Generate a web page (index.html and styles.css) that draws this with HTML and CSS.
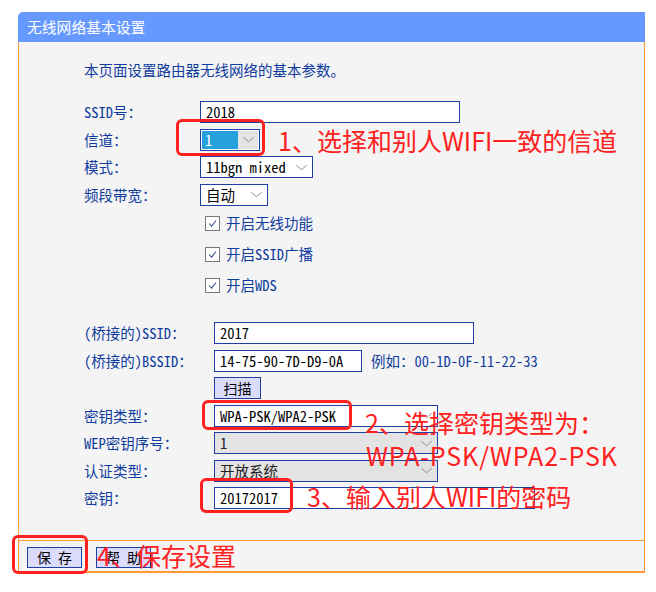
FILE: index.html
```html
<!DOCTYPE html>
<html lang="zh-CN">
<head>
  <meta charset="UTF-8"/>
  <title>无线网络基本设置</title>
  <link rel="stylesheet" href="styles.css">
</head>
<body>

  <div class="panel">
    <div class="panel-title">无线网络基本设置</div>

    <div class="panel-body">
      <p class="intro">本页面设置路由器无线网络的基本参数。</p>

      <!-- Basic settings -->
      <div class="form form-a">
        <label>SSID号：</label>
        <div class="field w-260">2018</div>

        <label>信道：</label>
        <div class="select w-60">
          <span class="picked">1</span>
          <span class="arrow gray"><svg viewBox="0 0 14 8"><path d="M1 1.5 L7 6.5 L13 1.5"/></svg></span>
        </div>

        <label>模式：</label>
        <div class="select w-113">
          <span class="val">11bgn mixed</span>
          <span class="arrow"><svg viewBox="0 0 14 8"><path d="M1 1.5 L7 6.5 L13 1.5"/></svg></span>
        </div>

        <label>频段带宽：</label>
        <div class="select w-68">
          <span class="val">自动</span>
          <span class="arrow"><svg viewBox="0 0 14 8"><path d="M1 1.5 L7 6.5 L13 1.5"/></svg></span>
        </div>
      </div>

      <!-- Switches -->
      <div class="checks">
        <div class="check"><span class="box"><svg viewBox="0 0 15 15"><path d="M3.5 7.5 L6.5 10.5 L11.5 4"/></svg></span>开启无线功能</div>
        <div class="check"><span class="box"><svg viewBox="0 0 15 15"><path d="M3.5 7.5 L6.5 10.5 L11.5 4"/></svg></span>开启SSID广播</div>
        <div class="check"><span class="box"><svg viewBox="0 0 15 15"><path d="M3.5 7.5 L6.5 10.5 L11.5 4"/></svg></span>开启WDS</div>
      </div>

      <!-- WDS bridge -->
      <div class="form form-b">
        <label>(桥接的)SSID：</label>
        <div class="field w-260">2017</div>

        <label>(桥接的)BSSID：</label>
        <div class="inline">
          <div class="field w-148">14-75-90-7D-D9-0A</div>
          <span class="hint">例如：00-1D-0F-11-22-33</span>
        </div>

        <span></span>
        <button class="btn scan">扫描</button>

        <label>密钥类型：</label>
        <div class="select w-224">
          <span class="val">WPA-PSK/WPA2-PSK</span>
          <span class="arrow"><svg viewBox="0 0 14 8"><path d="M1 1.5 L7 6.5 L13 1.5"/></svg></span>
        </div>

        <label>WEP密钥序号：</label>
        <div class="select w-224 off">
          <span class="val">1</span>
          <span class="arrow"><svg viewBox="0 0 14 8"><path d="M1 1.5 L7 6.5 L13 1.5"/></svg></span>
        </div>

        <label>认证类型：</label>
        <div class="select w-224 off">
          <span class="val">开放系统</span>
          <span class="arrow"><svg viewBox="0 0 14 8"><path d="M1 1.5 L7 6.5 L13 1.5"/></svg></span>
        </div>

        <label>密钥：</label>
        <div class="field w-321">20172017</div>
      </div>
    </div>

    <div class="panel-foot">
      <button class="btn">保 存</button>
      <button class="btn">帮 助</button>
    </div>
  </div>

  <!-- Red annotations drawn over the screenshot -->
  <div class="mark box1"></div>
  <div class="mark box2"></div>
  <div class="mark box3"></div>
  <div class="mark box4"></div>

  <div class="note n1">1、选择和别人WIFI一致的信道</div>
  <div class="note n2">2、选择密钥类型为：<span class="sub">WPA-PSK/WPA2-PSK</span></div>
  <div class="note n3">3、输入别人WIFI的密码</div>
  <div class="note n4">4、保存设置</div>

</body>
</html>
```

FILE: styles.css
```css
:root {
  --navy: #0f3c9e;
  --ctl-border: #1d3fa6;
  --orange: #ff9a33;
  --title-bg: #6699ff;
  --body-bg: #f4f4f4;
  --red: #ff2020;
}
* { margin:0; padding:0; box-sizing:border-box }
body {
  background:#fff;
  font-family:"Noto Sans Mono CJK SC","Noto Sans CJK SC",sans-serif;
  font-size:14.5px;
  color:var(--navy);
  position:relative;
  min-height:592px;
}

/* Panel */
.panel { width:627px; margin:12px 0 0 18px }
.panel-title {
  background:var(--title-bg); color:#fff;
  height:30px; line-height:30px; padding-left:9px;
  font-size:14.8px;
  border-top-left-radius:5px;
}
.panel-body {
  background:var(--body-bg);
  border-left:1px solid var(--orange); border-right:1px solid var(--orange);
  padding:18px 0 31px 65px;
}
.intro { line-height:20px; margin-bottom:21px }

/* Form grids */
.form {
  display:grid; grid-auto-rows:22px; row-gap:5.5px;
  align-items:center;
}
.form-a { grid-template-columns:116px auto }
.form-b { grid-template-columns:130px auto; margin-top:29px }
.form label { line-height:22px; white-space:nowrap }

.field, .select {
  height:22px; border:1px solid var(--ctl-border); background:#fff;
  color:#000; line-height:20px; white-space:nowrap;
}
.field { padding-left:5px }
.w-60 { width:60px } .w-68 { width:68px } .w-113 { width:113px }
.w-148 { width:148px } .w-224 { width:224px } .w-260 { width:260px }
.w-321 { width:321px }

.select { display:flex; align-items:center; padding:1px }
.select .val { flex:1; padding-left:4px }
.select .picked {
  width:36px; height:18px; background:#26a0da; color:#fff;
  line-height:18px; padding-left:3px;
}
.select .arrow {
  flex:0 0 auto; width:20px; height:18px;
  display:flex; align-items:center; justify-content:center;
}
.select .arrow.gray { flex:1; background:#e3e3e3 }
.select .arrow svg { width:13px; height:7px }
.select .arrow path { fill:none; stroke:#8a8a8a; stroke-width:1.1 }
.select.off { background:#e3e3e3 }
.select.off .val { color:#222 }

.inline { display:flex; align-items:center; gap:9px }

/* Check rows */
.checks {
  margin:9.5px 0 0 121px;
  display:flex; flex-direction:column; gap:15px;
}
.check { display:flex; align-items:center; gap:6px; height:16px; line-height:16px }
.check .box {
  width:15px; height:15px; border:1px solid #777; background:#fff;
  display:block;
}
.check .box svg { width:13px; height:13px; display:block }
.check .box path { fill:none; stroke:#3a4f8a; stroke-width:1.2 }

/* Buttons */
.btn {
  font-family:inherit; font-size:14px; color:#000;
  background:#dcdcff; border:1px solid var(--ctl-border);
  height:21px; line-height:19px; cursor:pointer;
}
.scan { width:47px; height:22px }

.panel-foot {
  background:var(--body-bg);
  border:1px solid var(--orange); border-bottom-width:2px;
  height:33px; padding:6px 0 0 8px;
  display:flex; gap:14px; align-items:flex-start;
}
.panel-foot .btn { width:55px }

/* Annotations */
.mark {
  position:absolute; border:3px solid var(--red); border-radius:6px;
}
.box1 { left:176px; top:119px; width:89px; height:37px }
.box2 { left:202px; top:400px; width:150px; height:30px }
.box3 { left:200px; top:478px; width:93px; height:35px }
.box4 { left:12px; top:535px; width:76px; height:39px }

.note {
  position:absolute; color:var(--red);
  font-family:"Noto Sans CJK SC",sans-serif;
  font-size:25px; line-height:33px; white-space:nowrap;
}
.note .sub { display:block; padding-left:1px; letter-spacing:0.9px }
.n1 { left:278px; top:124px }
.n2 { left:365px; top:406px }
.n3 { left:307px; top:480px }
.n4 { left:97px; top:539px }
```
